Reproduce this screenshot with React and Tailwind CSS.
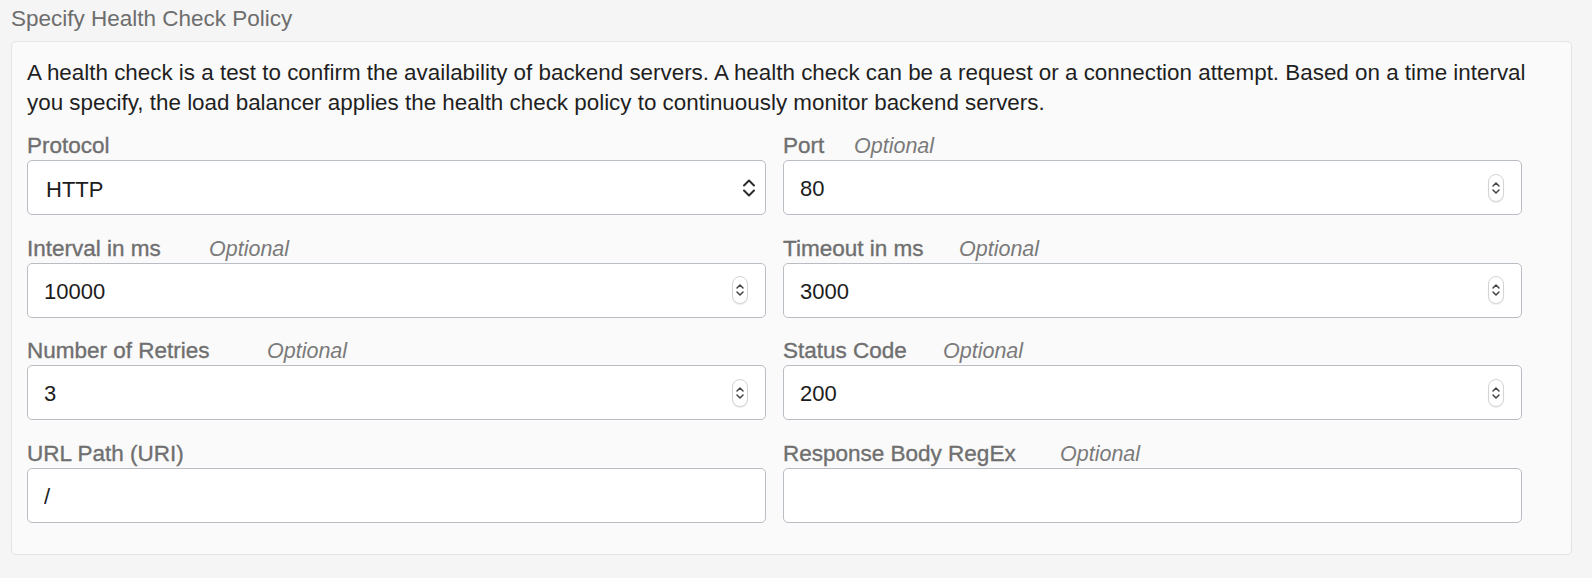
import React from 'react'

const FIELDS = [
  { id: 'protocol', label: 'Protocol', kind: 'select', value: 'HTTP' },
  { id: 'port', label: 'Port', optional: true, labelW: 'w-[71px]', kind: 'number', value: '80' },
  { id: 'interval', label: 'Interval in ms', optional: true, labelW: 'w-[182px]', kind: 'number', value: '10000' },
  { id: 'timeout', label: 'Timeout in ms', optional: true, labelW: 'w-[176px]', kind: 'number', value: '3000' },
  { id: 'retries', label: 'Number of Retries', optional: true, labelW: 'w-[240px]', kind: 'number', value: '3' },
  { id: 'status', label: 'Status Code', optional: true, labelW: 'w-[160px]', kind: 'number', value: '200' },
  { id: 'path', label: 'URL Path (URI)', kind: 'text', value: '/' },
  { id: 'regex', label: 'Response Body RegEx', optional: true, labelW: 'w-[277px]', kind: 'text', value: '' },
]

function SelectChevrons() {
  return (
    <svg width="14" height="22" viewBox="0 0 14 22" fill="none" className="pointer-events-none absolute right-[10px] top-1/2 -translate-y-1/2">
      <path d="M2 8.5 L7 3.5 L12 8.5" stroke="#2b2b2b" strokeWidth="2" strokeLinecap="round" strokeLinejoin="round" />
      <path d="M2 13.5 L7 18.5 L12 13.5" stroke="#2b2b2b" strokeWidth="2" strokeLinecap="round" strokeLinejoin="round" />
    </svg>
  )
}

function Spinner() {
  return (
    <div className="pointer-events-none absolute right-[18px] top-1/2 -translate-y-1/2 w-[16px] h-[28px] rounded-full border border-[#d4d4d4] bg-white flex items-center justify-center shadow-[0_1px_1px_rgba(0,0,0,0.08)]">
      <svg width="10" height="18" viewBox="0 0 10 18" fill="none">
        <path d="M2 7 L5 4 L8 7" stroke="#444" strokeWidth="1.5" strokeLinecap="round" strokeLinejoin="round" />
        <path d="M2 11 L5 14 L8 11" stroke="#444" strokeWidth="1.5" strokeLinecap="round" strokeLinejoin="round" />
      </svg>
    </div>
  )
}

function Field({ field }) {
  const box = 'w-full h-[55px] rounded-[5px] border border-[#b9bdc4] bg-white pt-[3px] text-[22px] text-[#1c1c1c] outline-none'
  return (
    <div className="flex flex-col">
      <div className="flex items-baseline h-[29px] pt-[1px] leading-[28px]">
        <span className={`text-[22.5px] text-[#6f6f6f] [-webkit-text-stroke:0.35px_#6f6f6f] shrink-0 ${field.labelW || ''}`}>{field.label}</span>
        {field.optional && <span className="text-[21.5px] italic text-[#7a7a7a]">Optional</span>}
      </div>
      <div className="relative">
        {field.kind === 'select' ? (
          <>
            <select defaultValue={field.value} className={`${box} appearance-none pl-[18px] pr-10`}>
              <option>HTTP</option>
              <option>TCP</option>
            </select>
            <SelectChevrons />
          </>
        ) : (
          <>
            <input type="text" defaultValue={field.value} className={`${box} pl-[16px] pr-12`} />
            {field.kind === 'number' && <Spinner />}
          </>
        )}
      </div>
    </div>
  )
}

export default function App() {
  return (
    <div className="min-h-[578px] w-full bg-[#f5f5f5] pl-[11px] pr-[20px] font-['Liberation_Sans',Arial,sans-serif]">
      {/* Header */}
      <div className="h-[37px] pt-[1px] leading-[36px] text-[22.5px] text-[#6d6d6d]">Specify Health Check Policy</div>

      {/* Panel */}
      <div className="mt-[4px] rounded-[5px] border border-[#e4e4e4] bg-[#fafafa] pl-[15px] pt-[16px] pb-[31px]">
        <p className="pr-[40px] text-[22.4px] leading-[29.5px] text-[#1f1f1f]">
          A health check is a test to confirm the availability of backend servers. A health check can be a request or a connection attempt. Based on a time interval you specify, the load balancer applies the health check policy to continuously monitor backend servers.
        </p>

        <div className="mt-[14px] grid w-[1495px] grid-cols-2 gap-x-[17px] gap-y-[18.6px]">
          {FIELDS.map((f) => (
            <Field key={f.id} field={f} />
          ))}
        </div>
      </div>
    </div>
  )
}
